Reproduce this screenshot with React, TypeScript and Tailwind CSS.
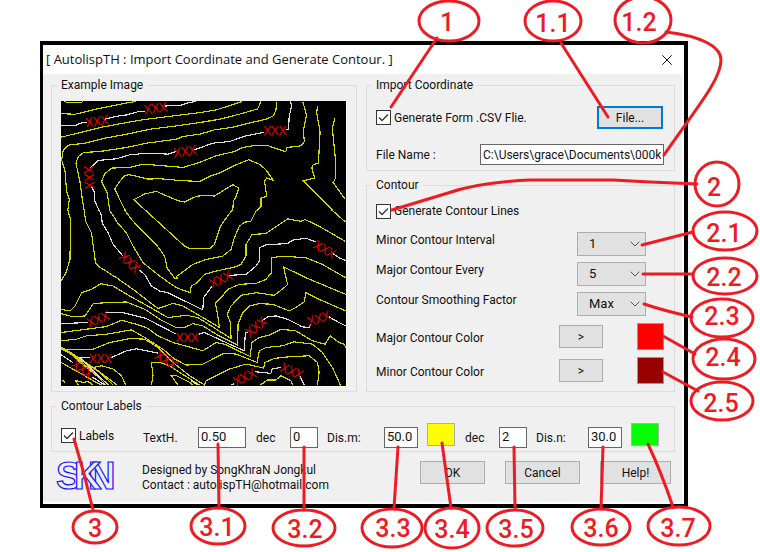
import { useState } from "react";
import type { ReactNode } from "react";
import { ChevronDown, X } from "lucide-react";

// Lines of the upper half of the contour map
const MINOR_TOP = [
  "103,199 112,203 153,203 160,199",
  "93,236 135,238 160,232 200,222 250,212 318,199",
  "93,307 155,292 210,278 290,263 350,253 430,243 510,233 560,225 637,200",
  "113,528 118,495 110,470 105,408 95,375 100,345 115,331 165,325 220,311 290,298 360,283 440,273 510,263 570,253 640,235 685,222 695,200",
  "163,528 158,500 150,440 138,385 145,365 162,353 210,350 290,338 350,325 440,313 460,305 510,298 555,285 610,277 670,262 710,253 732,243 740,225 743,200",
  "240,528 232,475 215,440 225,417 245,400 300,398 340,388 390,392 460,398 510,383 560,363 615,350 640,338 675,332 715,332 760,348 770,350 773,338 815,333 826,320 822,290 832,240 821,200",
  "287,528 275,505 255,463 270,440 285,422 300,420 355,433 390,432 460,438 510,440 540,425 570,415 620,390 658,375 690,388 710,405 732,437 712,430 706,440 712,485 695,490 695,517 682,528",
  "348,528 312,495 345,478 380,470 410,483 445,498 465,502 500,485 525,482 555,484 610,450 628,460 620,485 612,500 610,528",
  "865,212 863,235 873,290 868,385 852,390 848,400 857,430 822,438 912,528",
  "917,250 910,280 920,380 920,430 912,443 948,493",
];

const MAJOR_TOP = [
  "93,272 137,271 160,262 170,263",
  "225,253 260,244 290,240 330,229 345,230",
  "405,213 450,212 470,205 500,199",
  "180,400 205,377 260,372 300,360 355,355 415,358 440,350",
  "495,345 550,325 600,320 650,303 705,292",
  "770,283 778,283 780,245 788,210 783,200",
  "185,455 195,475 195,500 208,528",
];

// Lines of the lower half, in their own origin
const MINOR_BOTTOM = [
  "113,0 122,30 120,150 108,190 93,215",
  "163,0 167,35 185,70 190,110 197,160 208,172 260,205 310,240 385,298 430,282 460,290 520,325 570,355 565,320 558,282 575,265 595,240 630,225 680,222 710,210 727,190 728,145 760,140 830,145 880,165 950,205",
  "238,0 265,42 290,70 310,110 340,160 390,200 440,235 482,250 485,230 500,222 525,195 560,185 620,172 635,165 650,140 650,105 668,75 710,72 735,55 775,28 815,35 828,30 870,50 948,95",
  "283,0 310,35 380,105 405,140 412,175 435,207 445,208 440,202 490,165 530,150 580,140 605,120 615,85 630,50 645,38 665,35 682,0",
  "345,0 465,110 480,117 540,118 555,105 573,50 600,12 610,0",
  "907,0 950,38",
  "93,300 120,305 135,290 155,250 185,240 213,223 250,230 300,260 345,285 415,325 470,318 505,325 605,388 603,340 593,315 605,290 635,258 680,250 735,258 765,235 775,225 763,172 830,205 950,255",
  "93,313 130,323 165,320 190,283 230,280 290,278 345,300 390,330 440,355 465,355 490,343 520,350 560,375 625,408 626,345 640,310 660,290 690,283 730,285 780,305 800,295 825,278 830,250 870,270 950,305",
  "93,370 170,360 230,352 275,333 320,345 350,355 385,380 430,400 520,425 560,400 585,405 662,442 668,400 690,385 720,378 755,360 800,365 850,395 888,405 903,380 930,400 945,405 950,415",
  "93,395 140,390 170,380 230,375 305,362 345,385 400,420 435,450 470,468 520,465 585,432 620,435 683,460 690,425 710,415 760,410 795,398 850,405 880,430 910,475 935,530",
  "93,420 190,420 240,400 300,388 345,390 385,415 430,460 480,500 525,528 530,515 600,480 650,465 703,477 707,460 735,448 780,443 840,440 865,460 870,490 865,528",
  "365,528 370,500 365,460 390,460 420,470 450,490 510,528",
  "445,528 425,500 440,500 480,520 490,528",
  "93,414 130,435 200,482 262,528",
  "93,418 140,445 190,490 238,528",
  "100,418 150,450 210,490 250,528",
  "110,422 150,460 200,500 228,528",
  "93,460 150,492 195,518 215,528",
  "190,475 215,470 250,480 275,500 288,528",
  "145,528 137,515 160,520 175,518 190,528",
  "95,512 105,520",
  "693,528 715,513 740,513 755,500 785,515 790,528",
];

const MAJOR_BOTTOM = [
  "208,0 215,20 217,40 235,70 250,105 280,140",
  "328,182 345,195 365,230 390,245 415,250 520,302 522,265 548,230",
  "600,198 650,195 680,170 690,155 690,115 710,106 775,102 790,92 830,86 862,98",
  "912,132 930,145 950,153",
  "93,343 175,340",
  "225,309 275,309 350,328 440,375",
  "508,375 525,370 600,405 645,425 648,370 655,370",
  "698,335 715,323 740,320 775,330 820,353 840,355 845,345",
  "900,323 930,340 950,350",
  "180,446 150,446 185,480 235,528",
  "243,446 290,425 320,419 385,432",
  "93,437 128,460",
  "185,503 225,528",
  "485,515 505,528",
  "607,528 615,524",
  "677,488 725,493 728,480 755,475",
  "812,500 825,528",
];

// [x, y, angle] of each elevation mark
const MARKS = [
  [201, 258, -8],
  [377, 219, -8],
  [178, 428, 88],
  [466, 349, -8],
  [737, 285, 0],
  [300, 683, 42],
  [573, 734, -25],
  [887, 644, 30],
  [204, 854, -22],
  [473, 910, 0],
  [679, 877, -38],
  [869, 852, -18],
  [212, 971, 0],
  [410, 977, 32],
  [157, 1005, 38],
  [645, 1029, -26],
  [788, 1011, 22],
];

const CALLOUTS = [
  { label: "1", cx: 449, cy: 21, rx: 30, ry: 20, tx: 447, ty: 31, d: "M437 38L391 107" },
  { label: "1.1", cx: 553, cy: 21, rx: 28, ry: 20, tx: 553, ty: 32, d: "M561 43L608 117" },
  { label: "1.2", cx: 643, cy: 20, rx: 28, ry: 23, tx: 639, ty: 31, d: "M666 32C700 36 721 46 721 60C721 80 695 110 664 155" },
  { label: "2", cx: 717, cy: 184, rx: 22, ry: 22, tx: 714, ty: 196, d: "M697 184L650 182L613 180H531Q480 182 448 193L392 210" },
  { label: "2.1", cx: 725, cy: 231, rx: 32, ry: 19, tx: 724, ty: 242, d: "M693 232L642 245" },
  { label: "2.2", cx: 725, cy: 276, rx: 32, ry: 18, tx: 724, ty: 286, d: "M693 274H643" },
  { label: "2.3", cx: 722, cy: 318, rx: 31, ry: 19, tx: 722, ty: 325, d: "M692 317Q665 311 644 304" },
  { label: "2.4", cx: 724, cy: 359, rx: 31, ry: 20, tx: 723, ty: 366, d: "M663 336L695 354" },
  { label: "2.5", cx: 722, cy: 401, rx: 31, ry: 19, tx: 721, ty: 412, d: "M663 372L698 391" },
  { label: "3", cx: 95, cy: 527, rx: 22, ry: 16, tx: 95, ty: 537, d: "M74 439Q85 475 93 510" },
  { label: "3.1", cx: 218, cy: 526, rx: 27, ry: 18, tx: 217, ty: 536, d: "M218 444L219 508" },
  { label: "3.2", cx: 304, cy: 528, rx: 31, ry: 18, tx: 305, ty: 538, d: "M304 447V510" },
  { label: "3.3", cx: 392, cy: 528, rx: 30, ry: 19, tx: 393, ty: 537, d: "M398 447L394 508" },
  { label: "3.4", cx: 452, cy: 528, rx: 27, ry: 20, tx: 452, ty: 538, d: "M442 443L451 508" },
  { label: "3.5", cx: 515, cy: 528, rx: 28, ry: 18, tx: 516, ty: 538, d: "M514 447L515 509" },
  { label: "3.6", cx: 601, cy: 527, rx: 29, ry: 18, tx: 601, ty: 537, d: "M603 447L601 509" },
  { label: "3.7", cx: 679, cy: 526, rx: 31, ry: 19, tx: 678, ty: 537, d: "M648 444Q662 474 673 507" },
];

function ContourMap() {
  return (
    <svg viewBox="93 198 858 858" className="block size-[286px] border-r border-b border-white bg-black" role="img" aria-label="Contour map example">
      <g fill="none" strokeWidth="3.5" shapeRendering="crispEdges">
        {MINOR_TOP.map((p) => (
          <polyline key={p} points={p} stroke="#d8d800" />
        ))}
        {MAJOR_TOP.map((p) => (
          <polyline key={p} points={p} stroke="#dedede" />
        ))}
        <g transform="translate(0 525)">
          {MINOR_BOTTOM.map((p) => (
            <polyline key={p} points={p} stroke="#d8d800" />
          ))}
          {MAJOR_BOTTOM.map((p) => (
            <polyline key={p} points={p} stroke="#dedede" />
          ))}
        </g>
      </g>
      <g fill="#f00000" textAnchor="middle" fontSize="40" className="font-['Open_Sans',sans-serif]">
        {MARKS.map(([x, y, angle]) => (
          <text key={`${x}-${y}`} x={x} y={y + 15} transform={`rotate(${angle} ${x} ${y})`}>
            XXX
          </text>
        ))}
      </g>
    </svg>
  );
}

function Group({ title, className, children }: { title: string; className: string; children: ReactNode }) {
  return (
    <fieldset className={`min-w-0 border border-[#dcdcdc] px-[9px] ${className}`}>
      <legend className="-ml-1 px-1 leading-4">{title}</legend>
      {children}
    </fieldset>
  );
}

function Check({ label }: { label: string }) {
  const [checked, setChecked] = useState(true);
  return (
    <label className="flex items-center gap-[3px] leading-4">
      <span className="grid size-[15px] shrink-0">
        <input
          type="checkbox"
          checked={checked}
          onChange={(e) => setChecked(e.target.checked)}
          className="col-start-1 row-start-1 appearance-none border border-[#333] bg-white"
        />
        {checked && (
          <svg viewBox="0 0 15 15" className="pointer-events-none col-start-1 row-start-1" fill="none" stroke="#333" strokeWidth="1.3">
            <path d="M3 7.5L6 10.5L12 4.5" />
          </svg>
        )}
      </span>
      {label}
    </label>
  );
}

function SelectRow({ id, label, value, options }: { id: string; label: string; value: string; options: string[] }) {
  return (
    <div className="flex items-start justify-between pr-[19px]">
      <label htmlFor={id} className="leading-4">
        {label}
      </label>
      <div className="relative">
        <select id={id} defaultValue={value} className="block h-6 w-[69px] appearance-none border border-[#adadad] bg-[#e1e1e1] pl-[11px] text-[13px]">
          {options.map((o) => (
            <option key={o}>{o}</option>
          ))}
        </select>
        <ChevronDown className="pointer-events-none absolute top-1 right-[3px] size-4 text-[#555]" strokeWidth={1.5} />
      </div>
    </div>
  );
}

function ColorRow({ label, swatch }: { label: string; swatch: string }) {
  return (
    <div className="flex items-center">
      <span className="flex-1 pt-0.5">{label}</span>
      <button aria-label={`Choose ${label}`} className="mr-[34px] h-[23px] w-11 border border-[#adadad] bg-[#e1e1e1] leading-4">
        &gt;
      </button>
      <button aria-label={label} className={`mr-px size-[27px] border border-[#999] ${swatch}`} />
    </div>
  );
}

function NumberField({ label, value, labelWidth, width }: { label: string; value: string; labelWidth: string; width: string }) {
  return (
    <label className="flex h-[21px] items-center">
      <span className={`${labelWidth} pt-px`}>{label}</span>
      <input defaultValue={value} className={`h-[21px] border border-[#666] bg-white pb-0.5 pl-0.5 text-[13px] ${width}`} />
    </label>
  );
}

function Callouts() {
  return (
    <svg viewBox="0 0 760 552" className="pointer-events-none absolute top-0 left-0 h-[552px] w-[760px]">
      {CALLOUTS.map((c) => (
        <g key={c.label}>
          <g fill="none" stroke="#ed1c24" strokeWidth="3" strokeLinecap="round">
            <ellipse cx={c.cx} cy={c.cy} rx={c.rx} ry={c.ry} />
            <path d={c.d} />
          </g>
          <text x={c.tx} y={c.ty} textAnchor="middle" fill="#ed1c24" className="font-['Roboto',sans-serif] text-[25px] font-medium">
            {c.label}
          </text>
        </g>
      ))}
    </svg>
  );
}

export default function App() {
  return (
    <main className="relative min-h-[552px] bg-white pt-[41px] pr-[72px] pl-10 font-['Roboto',sans-serif] text-xs text-[#111]">
      <section className="border-4 border-l-[3px] border-black bg-white pr-0.5 pb-0.5">
        <header className="flex h-[29px] items-center justify-between pr-[6px] pl-[3px]">
          <h1 className="font-['Open_Sans',sans-serif] text-[13px]">[ AutolispTH : Import Coordinate and Generate Contour. ]</h1>
          <button aria-label="Close">
            <X className="size-[18px]" strokeWidth={1.3} />
          </button>
        </header>

        <div className="bg-[#f0f0f0] pt-[3px] pr-[7px] pb-[9px] pl-2">
          <div className="flex gap-[9px]">
            <Group title="Example Image" className="shrink-0 pb-1">
              <div className="pt-2">
                <ContourMap />
              </div>
            </Group>

            <div className="flex min-w-0 flex-1 flex-col gap-[6px]">
              <Group title="Import Coordinate" className="pb-[5px]">
                <div className="flex items-center justify-between pt-[13px] pr-0.5">
                  <Check label="Generate Form .CSV Flie." />
                  <button className="h-[23px] w-[66px] border-2 border-[#0078d7] bg-[#e1e1e1] leading-4">File...</button>
                </div>
                <div className="flex items-center pt-[15px]">
                  <label htmlFor="file-name" className="w-26">
                    File Name :
                  </label>
                  <input
                    id="file-name"
                    defaultValue="C:\Users\grace\Documents\000k"
                    className="mr-px h-[21px] min-w-0 flex-1 border border-[#666] bg-white pl-0.5"
                  />
                </div>
              </Group>

              <Group title="Contour" className="flex-1 pb-[6px]">
                <div className="pt-[10px] pb-[13px]">
                  <Check label="Generate Contour Lines" />
                </div>
                <div className="flex flex-col gap-[6px]">
                  <SelectRow id="minor-interval" label="Minor Contour Interval" value="1" options={["1", "2", "5"]} />
                  <SelectRow id="major-every" label="Major Contour Every" value="5" options={["2", "5", "10"]} />
                  <SelectRow id="smoothing" label="Contour Smoothing Factor" value="Max" options={["Min", "Max"]} />
                </div>
                <div className="flex flex-col gap-[7px] pt-[7px]">
                  <ColorRow label="Major Contour Color" swatch="bg-[#ff0000]" />
                  <ColorRow label="Minor Contour Color" swatch="bg-[#990000]" />
                </div>
              </Group>
            </div>
          </div>

          <div className="pt-[6px]">
            <Group title="Contour Labels" className="pb-[3px]">
              <div className="flex items-end pt-[9px]">
                <div className="w-[82px] self-center">
                  <Check label="Labels" />
                </div>
                <NumberField label="TextH." value="0.50" labelWidth="w-[55px]" width="w-12" />
                <div className="pl-[10px]">
                  <NumberField label="dec" value="0" labelWidth="w-[34px]" width="w-7" />
                </div>
                <div className="pl-[9px]">
                  <NumberField label="Dis.m:" value="50.0" labelWidth="w-[57px]" width="w-[34px]" />
                </div>
                <button aria-label="Dis.m color" className="ml-[9px] h-[23px] w-7 self-start border border-[#adadad] bg-[#ffff00]" />
                <div className="pt-1 pl-[10px]">
                  <NumberField label="dec" value="2" labelWidth="w-[34px]" width="w-7" />
                </div>
                <div className="pl-[9px]">
                  <NumberField label="Dis.n:" value="30.0" labelWidth="w-[52px]" width="w-[34px]" />
                </div>
                <button aria-label="Dis.n color" className="ml-[9px] h-[23px] w-7 self-start border border-[#adadad] bg-[#00ff00]" />
              </div>
            </Group>
          </div>

          <footer className="flex items-start pt-[9px] pr-1 pl-[5px]">
            <svg viewBox="0 0 60 30" className="h-[30px] w-[60px] overflow-visible" role="img" aria-label="SKN">
              <g fill="#f0f0f0" stroke="#1010ff" strokeWidth="1.2" fontSize="38" className="font-['Liberation_Sans',sans-serif] font-bold">
                <text x="0" y="28">S</text>
                <text x="32" y="28">N</text>
                <text x="18" y="28">K</text>
              </g>
            </svg>
            <p className="flex-1 pt-0.5 pl-[26px] leading-[15px]">
              Designed by SongKhraN Jongkul
              <br />
              Contact : autolispTH@hotmail.com
            </p>
            <div className="flex gap-5">
              <button className="h-[23px] w-[65px] border border-[#adadad] bg-[#e1e1e1] leading-4">OK</button>
              <button className="h-[23px] w-[75px] border border-[#adadad] bg-[#e1e1e1] leading-4">Cancel</button>
              <button className="h-[23px] w-[71px] border border-[#adadad] bg-[#e1e1e1] leading-4">Help!</button>
            </div>
          </footer>
        </div>
      </section>
      <Callouts />
    </main>
  );
}
